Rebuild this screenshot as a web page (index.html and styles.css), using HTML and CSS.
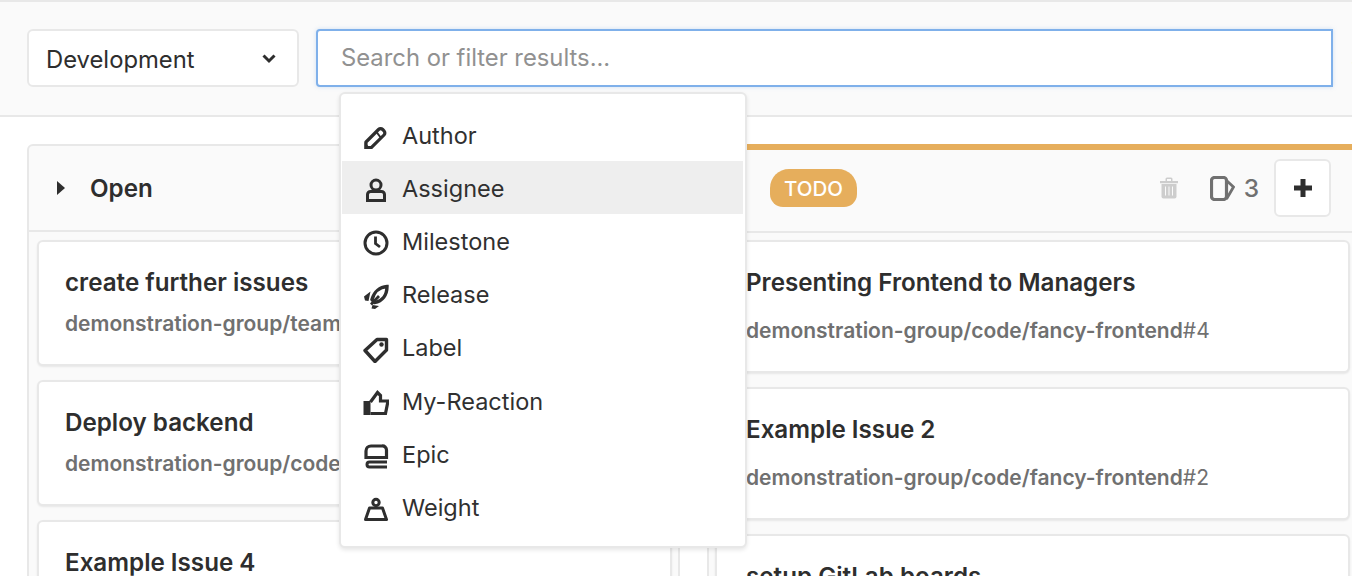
FILE: index.html
```html
<!DOCTYPE html>
<html lang="en">
<head>
    <meta charset="UTF-8">
    <meta name="viewport" content="width=device-width, initial-scale=1.0">
    <title>Development board</title>
    <link rel="stylesheet" href="styles.css">
</head>
<body>
    <div class="page">
        <div class="filter-bar">
            <div class="board-select">
                <span>Development</span>
                <svg class="chevron" width="14" height="14" viewBox="0 0 14 14"><path d="M1.500 3.500 7 9l5.500-5.500" fill="none" stroke="#2e2e2e" stroke-width="3"/></svg>
            </div>
            <div class="search-wrap">
                <input class="search" type="text" placeholder="Search or filter results...">
                <div class="dropdown">
                    <div class="dropdown-item">
                        <svg class="item-icon" viewBox="0 0 26 26"><path d="M3 23.500v-5.500L15.500 5.500a3 3 0 0 1 4.200 0l1.300 1.300a3 3 0 0 1 0 4.200L8.500 23.500Z" fill="none" stroke="#2e2e2e" stroke-width="3.200"/><path d="M13.500 8l4.500 6" stroke="#2e2e2e" stroke-width="2"/><path d="M1.500 25v-7l6.500 7Z" fill="#2e2e2e"/></svg>
                        Author
                    </div>
                    <div class="dropdown-item active">
                        <svg class="item-icon" viewBox="0 0 26 26"><circle cx="13" cy="8" r="5" fill="none" stroke="#2e2e2e" stroke-width="3"/><path d="M4.500 23.500v-6a3 3 0 0 1 3-3h11a3 3 0 0 1 3 3v6Z" fill="none" stroke="#2e2e2e" stroke-width="3"/></svg>
                        Assignee
                    </div>
                    <div class="dropdown-item">
                        <svg class="item-icon" viewBox="0 0 26 26"><circle cx="13" cy="13" r="11" fill="none" stroke="#2e2e2e" stroke-width="3"/><path d="M12.500 6.500v7l4.500 3.500" fill="none" stroke="#2e2e2e" stroke-width="2.800"/></svg>
                        Milestone
                    </div>
                    <div class="dropdown-item">
                        <svg class="item-icon" viewBox="0 0 26 26"><path d="M24 2.500C17 3 11 7.500 9 15.500l2.500 3C19.500 17 24 11 24 2.500Z" fill="none" stroke="#2e2e2e" stroke-width="3.400"/><path d="M8 20.500 16 12" stroke="#2e2e2e" stroke-width="2.800"/><path d="M7.500 7.500 1 12.500l1 4 3.500.5ZM9.500 21l6.500 1-4 3-3.500-.5Z" fill="#2e2e2e"/></svg>
                        Release
                    </div>
                    <div class="dropdown-item">
                        <svg class="item-icon" viewBox="0 0 26 26"><path d="M2 13.500 14 2.500h9.500V13L12 24.500Z" fill="none" stroke="#2e2e2e" stroke-width="3.400" stroke-linejoin="round"/><circle cx="18.500" cy="7.500" r="2.200" fill="#2e2e2e"/></svg>
                        Label
                    </div>
                    <div class="dropdown-item">
                        <svg class="item-icon" viewBox="0 0 26 26"><path d="M0.500 11h7v14h-7Z" fill="#2e2e2e"/><path d="M7.500 12 14.500 2.500l3 3v5.500h7.500l-2.500 12.500H7.500" fill="none" stroke="#2e2e2e" stroke-width="3.200"/></svg>
                        My-Reaction
                    </div>
                    <div class="dropdown-item">
                        <svg class="item-icon" viewBox="0 0 26 26"><path d="M23.500 14.500H3V8a5 5 0 0 1 5-5h11a4 4 0 0 1 4.500 4Z" fill="none" stroke="#2e2e2e" stroke-width="3.200"/><path d="M24 19H6.500a2.500 2.500 0 0 0 0 5H24" fill="none" stroke="#2e2e2e" stroke-width="3"/></svg>
                        Epic
                    </div>
                    <div class="dropdown-item">
                        <svg class="item-icon" viewBox="0 0 26 26"><circle cx="13" cy="6.500" r="3.200" fill="none" stroke="#2e2e2e" stroke-width="3"/><path d="M6.500 12h13l4 11.500H2.500Z" fill="none" stroke="#2e2e2e" stroke-width="3" stroke-linejoin="round"/></svg>
                        Weight
                    </div>
                </div>
            </div>
            <span class="sort-label">Sort</span>
        </div>

        <div class="boards">
            <section class="board">
                <header class="board-header">
                    <svg class="caret" width="10" height="16" viewBox="0 0 10 16"><path d="M1 1 9 8l-8 7Z" fill="#2e2e2e"/></svg>
                    <span class="board-title">Open</span>
                </header>
                <div class="cards">
                    <div class="card">
                        <div class="card-title">create further issues</div>
                        <div class="card-ref">demonstration-group/team-a/backend#1</div>
                    </div>
                    <div class="card">
                        <div class="card-title">Deploy backend</div>
                        <div class="card-ref">demonstration-group/code/backend#3</div>
                    </div>
                    <div class="card">
                        <div class="card-title">Example Issue 4</div>
                    </div>
                </div>
            </section>

            <section class="board board-todo">
                <header class="board-header">
                    <span class="badge">TODO</span>
                    <div class="board-tools">
                        <svg class="trash" width="18" height="22" viewBox="0 0 18 22"><path d="M0 4h18v2.200H0ZM5.500 4V2a1.500 1.500 0 0 1 1.500-1.500h4A1.500 1.500 0 0 1 12.500 2v2H11V2H7v2Z" fill="#cdcdcd"/><path d="M1.500 7h15v12.500a2 2 0 0 1-2 2h-11a2 2 0 0 1-2-2Z" fill="#cdcdcd"/><path d="M5.500 9.500v9M9 9.500v9M12.500 9.500v9" stroke="#fafafa" stroke-width="1"/></svg>
                        <svg class="issues-icon" width="25" height="25" viewBox="0 0 25 25"><path d="M4.500 1.500h9a3 3 0 0 1 3 3v16a3 3 0 0 1-3 3h-9a3 3 0 0 1-3-3v-16a3 3 0 0 1 3-3Z" fill="none" stroke="#707070" stroke-width="3.200"/><path d="M16.500 4.500 23.500 11 16.500 23" fill="none" stroke="#707070" stroke-width="2.800"/></svg>
                        <span class="issue-count">3</span>
                        <button class="add-btn">
                            <svg width="20" height="20" viewBox="0 0 20 20"><path d="M10 1v18M1 10h18" stroke="#2e2e2e" stroke-width="5"/></svg>
                        </button>
                    </div>
                </header>
                <div class="cards">
                    <div class="card card-tall">
                        <div class="card-title">Presenting Frontend to Managers</div>
                        <div class="card-ref">demonstration-group/code/fancy-frontend<span class="ref-num">#4</span></div>
                    </div>
                    <div class="card card-tall">
                        <div class="card-title">Example Issue 2</div>
                        <div class="card-ref">demonstration-group/code/fancy-frontend<span class="ref-num">#2</span></div>
                    </div>
                    <div class="card card-tall">
                        <div class="card-title">setup GitLab boards</div>
                    </div>
                </div>
            </section>
        </div>
    </div>
</body>
</html>
```

FILE: styles.css
```css
* {
    box-sizing: border-box;
}

body {
    font-family: 'Inter', 'Noto Sans', sans-serif;
    background-color: #fff;
    color: #2e2e2e;
    margin: 0;
}

.page {
    width: 1352px;
    height: 576px;
    overflow: hidden;
}

.filter-bar {
    display: flex;
    align-items: center;
    gap: 18px;
    height: 117px;
    padding: 0 0 1px 27px;
    background: #fafafa;
    border-top: 2px solid #e8e8e8;
    border-bottom: 2px solid #e8e8e8;
}

.board-select {
    flex: none;
    display: flex;
    align-items: center;
    justify-content: space-between;
    width: 272px;
    height: 58px;
    padding: 2px 21px 0 17px;
    background: #fff;
    border: 2px solid #e8e8e8;
    border-radius: 6px;
    font-size: 23.8px;
}

.search-wrap {
    position: relative;
    flex: none;
    width: 1017px;
    margin-left: -1px;
}

.search {
    display: block;
    width: 100%;
    height: 58px;
    padding: 0 23px 2px;
    border: 2px solid #7fb0ea;
    border-radius: 4px 0 0 4px;
    box-shadow: 0 0 4px rgba(127, 176, 234, 0.35);
    outline: none;
    background: #fff;
    font-family: inherit;
    font-size: 23.8px;
    color: #2e2e2e;
}

.search::placeholder {
    color: #919191;
    opacity: 1;
}

.dropdown {
    position: absolute;
    top: 63px;
    left: 23px;
    z-index: 5;
    width: 408px;
    height: 456px;
    padding: 14px 2px 0 1px;
    background: #fff;
    border: 2px solid #e8e8e8;
    border-radius: 6px;
    box-shadow: 0 2px 4px rgba(0, 0, 0, 0.1);
}

.dropdown-item {
    display: flex;
    align-items: center;
    gap: 13px;
    height: 53.2px;
    padding: 1px 0 0 21px;
    font-size: 23.5px;
    color: #303030;
}

.dropdown-item.active {
    background: #eee;
}

.item-icon {
    flex: none;
    width: 26px;
    height: 26px;
    margin-top: 4px;
}

.sort-label {
    flex: none;
    font-size: 23.8px;
    color: #555;
}

.boards {
    display: flex;
    gap: 27px;
    padding: 27px 0 0 27px;
}

.board {
    flex: none;
    width: 653px;
    background: #fafafa;
    border: 2px solid #e8e8e8;
    border-bottom: 0;
    border-radius: 6px 6px 0 0;
}

.board-todo {
    border-top: 6px solid #e6ae5c;
    border-radius: 0;
}

.board-header {
    display: flex;
    align-items: center;
    height: 86px;
    padding: 0 21px 0 27px;
    border-bottom: 2px solid #e8e8e8;
}

.board-todo .board-header {
    height: 83px;
    padding: 0 27px 5px 61px;
}

.caret {
    margin-right: 24px;
}

.board-title {
    font-size: 24.2px;
    font-weight: 600;
}

.badge {
    display: flex;
    align-items: center;
    height: 38px;
    padding: 0 14px;
    background: #e6ae5c;
    border-radius: 19px 19px 13px 13px;
    color: #fff;
    font-size: 20.5px;
    font-weight: 500;
}

.board-tools {
    display: flex;
    align-items: center;
    margin-left: auto;
}

.trash {
    margin-right: 32px;
}

.issues-icon {
    margin-right: 9px;
}

.issue-count {
    margin-right: 15px;
    font-size: 24.5px;
    font-weight: 500;
    color: #707070;
}

.add-btn {
    display: flex;
    align-items: center;
    justify-content: center;
    width: 57px;
    height: 58px;
    padding: 0;
    background: #fff;
    border: 2px solid #e8e8e8;
    border-radius: 6px;
}

.cards {
    display: flex;
    flex-direction: column;
    gap: 14px;
    padding: 8px 6px 0 8px;
}

.board-todo .cards {
    padding: 7px 8px 0 6px;
}

.card {
    flex: none;
    height: 126px;
    padding: 27px 26px 0;
    background: #fff;
    border: 2px solid #e8e8e8;
    border-radius: 6px;
    box-shadow: 0 1px 2px rgba(0, 0, 0, 0.08);
}

.card-tall {
    height: 133px;
    padding-left: 29px;
}

.card-title {
    font-size: 24.2px;
    font-weight: 600;
    line-height: 28px;
    white-space: nowrap;
}

.card-ref {
    margin-top: 14px;
    font-size: 21px;
    font-weight: 600;
    line-height: 26px;
    color: #707070;
    white-space: nowrap;
}

.card-tall .card-ref {
    margin-top: 21px;
}

.ref-num {
    font-weight: 400;
}
```
